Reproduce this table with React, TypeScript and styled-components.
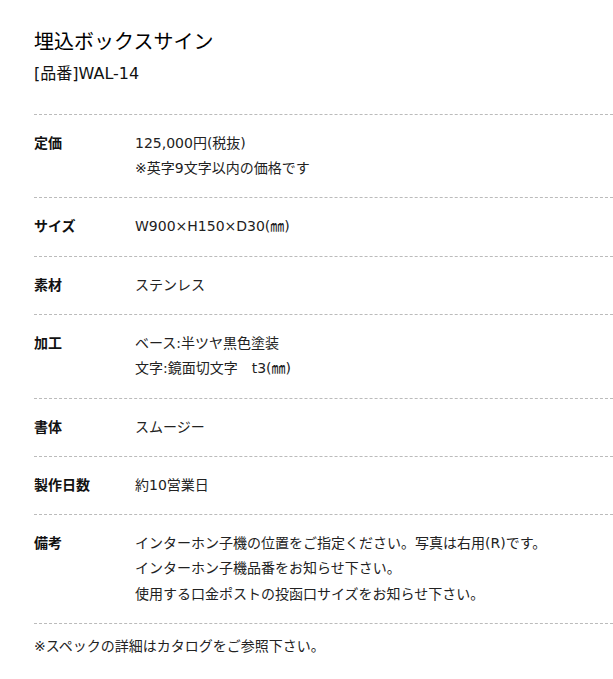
import React from "react";
import styled, { createGlobalStyle } from "styled-components";

const Global = createGlobalStyle`
  html, body { margin: 0; padding: 0; background: #fff; }
  body {
    font-family: "DejaVu Sans", "Noto Sans CJK JP", sans-serif;
    color: #333;
  }
`;

const Page = styled.div`
  padding: 27px 0 40px 34px;
`;

const Title = styled.h1`
  margin: 0;
  font-size: 20px;
  line-height: 30px;
  font-weight: 400;
  color: #000;
`;

const Code = styled.p`
  margin: 3px 0 25px;
  font-size: 16px;
  line-height: 28.8px;
  color: #111;
`;

const Specs = styled.dl`
  margin: 0;
  border-bottom: 1px dashed #bbb;
`;

const Row = styled.div`
  display: flex;
  border-top: 1px dashed #bbb;
  padding: 16px 0;
  font-size: 14px;
  line-height: 25.3px;
`;

const Label = styled.dt`
  flex: 0 0 101px;
  margin: 0;
  font-weight: 700;
  color: #111;
`;

const Value = styled.dd`
  margin: 0;
  color: #222;
`;

const Line = styled.div``;

const Note = styled.p`
  margin: 10px 0 0;
  font-size: 14px;
  line-height: 25.3px;
  color: #222;
`;

const specs: { label: string; lines: string[] }[] = [
  { label: "定価", lines: ["125,000円(税抜)", "※英字9文字以内の価格です"] },
  { label: "サイズ", lines: ["W900×H150×D30(㎜)"] },
  { label: "素材", lines: ["ステンレス"] },
  { label: "加工", lines: ["ベース:半ツヤ黒色塗装", "文字:鏡面切文字　t3(㎜)"] },
  { label: "書体", lines: ["スムージー"] },
  { label: "製作日数", lines: ["約10営業日"] },
  {
    label: "備考",
    lines: [
      "インターホン子機の位置をご指定ください。写真は右用(R)です。",
      "インターホン子機品番をお知らせ下さい。",
      "使用する口金ポストの投函口サイズをお知らせ下さい。",
    ],
  },
];

export default function App() {
  return (
    <>
      <Global />
      <Page>
        <Title>埋込ボックスサイン</Title>
        <Code>[品番]WAL-14</Code>
        <Specs>
          {specs.map((s) => (
            <Row key={s.label}>
              <Label>{s.label}</Label>
              <Value>
                {s.lines.map((l) => (
                  <Line key={l}>{l}</Line>
                ))}
              </Value>
            </Row>
          ))}
        </Specs>
        <Note>※スペックの詳細はカタログをご参照下さい。</Note>
      </Page>
    </>
  );
}
